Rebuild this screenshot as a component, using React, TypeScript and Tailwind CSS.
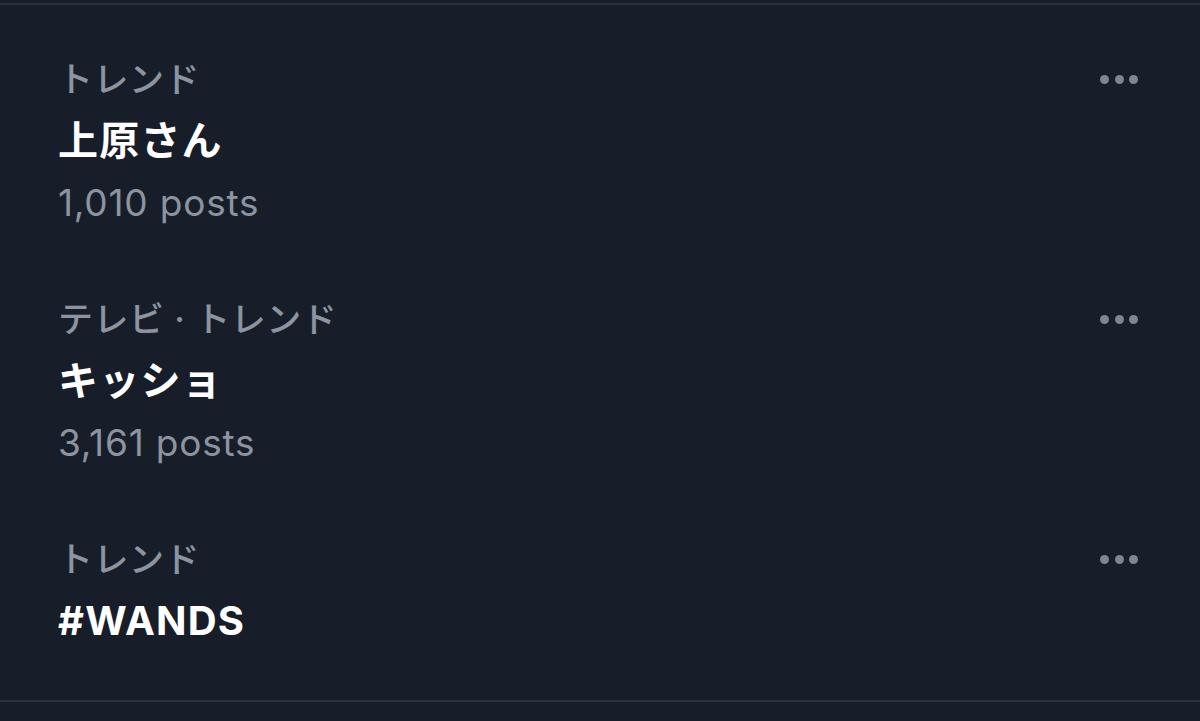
import React from "react";

interface Trend {
  category: string;
  title: string;
  posts?: string;
}

const trends: Trend[] = [
  { category: "トレンド", title: "上原さん", posts: "1,010 posts" },
  { category: "テレビ · トレンド", title: "キッショ", posts: "3,161 posts" },
  { category: "トレンド", title: "#WANDS" },
];

function Dots() {
  return (
    <div className="self-start h-[62px] flex items-center gap-[5.5px] pr-[62px]">
      <span className="block w-[9px] h-[9px] rounded-full bg-[#7d8793]" />
      <span className="block w-[9px] h-[9px] rounded-full bg-[#7d8793]" />
      <span className="block w-[9px] h-[9px] rounded-full bg-[#7d8793]" />
    </div>
  );
}

function TrendRow({ trend }: { trend: Trend }) {
  return (
    <div className="flex justify-between py-[27px]">
      <div className="pl-[58px]">
        <div className="h-[62px] flex items-center text-[35px] font-medium tracking-[0.5px] text-[#8b94a0] whitespace-pre">
          {trend.category}
        </div>
        <div className="h-[62px] flex items-center text-[40px] font-bold tracking-[1.2px] text-white">
          {trend.title}
        </div>
        {trend.posts && (
          <div className="h-[62px] flex items-center text-[37px] tracking-[0.8px] text-[#8b94a0]">
            {trend.posts}
          </div>
        )}
      </div>
      <Dots />
    </div>
  );
}

export default function App() {
  return (
    <div
      className="w-[1200px] h-[721px] bg-[#181e29] overflow-hidden"
      style={{ fontFamily: '"Inter", "Noto Sans CJK JP", sans-serif' }}
    >
      <div className="pt-[3px]">
        <div className="h-[2px] bg-[#2c323d]" />
      </div>
      <div className="pt-[16px]">
        {trends.map((t, i) => (
          <TrendRow key={i} trend={t} />
        ))}
      </div>
      <div className="mt-[21px] h-[2px] bg-[#2c323d]" />
    </div>
  );
}
